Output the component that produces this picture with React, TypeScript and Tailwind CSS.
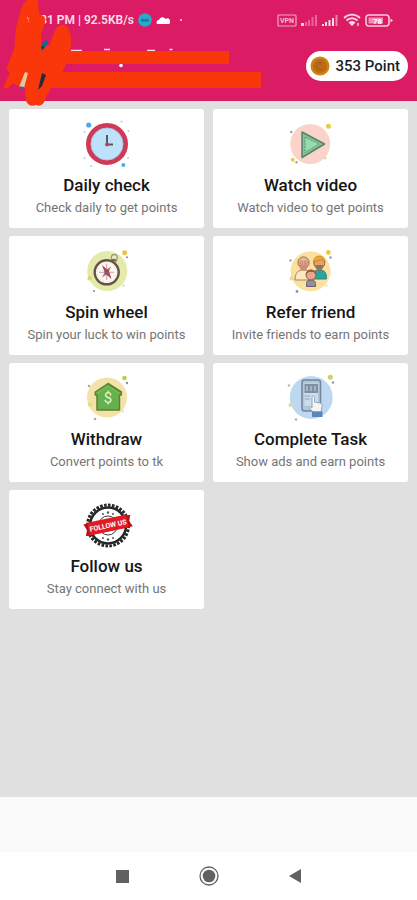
import React from 'react';

interface Task {
    title: string;
    subtitle: string;
    icon: React.ReactNode;
}

const IconBox: React.FC<{ children: React.ReactNode }> = ({ children }) => (
    <svg viewBox="0 0 48 48" className="size-12 overflow-visible" fill="none" aria-hidden="true">
        {children}
    </svg>
);

const ClockIcon = () => (
    <IconBox>
        <circle cx="24" cy="24" r="18.5" fill="#bfe2fb" stroke="#cf3a57" strokeWidth="5" />
        <circle cx="24" cy="24" r="16" stroke="#a9c9e6" strokeWidth="1" />
        <path d="M24 15v9.5h6" stroke="#46606c" strokeWidth="2" />
        <circle cx="24" cy="24.5" r="2" fill="#c23f5e" />
        <circle cx="5.7" cy="5" r="2.6" fill="#56a8e4" />
        <circle cx="40.3" cy="45" r="2" fill="#56a8e4" />
        <g fill="#b5cfdf">
            <circle cx="38.5" cy="1.5" r="1" />
            <circle cx="45.5" cy="11" r="1" />
            <circle cx="1.5" cy="12" r="1" />
            <circle cx="1.5" cy="38" r="1" />
            <circle cx="8" cy="46" r="1" />
            <circle cx="45" cy="38" r="1" />
        </g>
    </IconBox>
);

const PlayIcon = () => (
    <IconBox>
        <circle cx="23.2" cy="24" r="20" fill="#fad4cb" />
        <path d="M15 12v25.5L37.5 24z" fill="#7fc59a" stroke="#5f7f66" strokeWidth="1.5" strokeLinejoin="round" />
        <path d="M18 17v15.5L32 24z" fill="#96dcae" stroke="#65957a" strokeWidth="1" strokeDasharray="2 1" />
        <circle cx="41.5" cy="6.3" r="2.5" fill="#eccb3e" />
        <circle cx="5.8" cy="39.7" r="2" fill="#eccb3e" />
        <circle cx="4.2" cy="12" r="1.3" fill="#a7a2a5" />
        <circle cx="9.5" cy="42.3" r="1.2" fill="#a7a2a5" />
        <circle cx="38" cy="38" r="1.5" fill="#e6d9a4" />
    </IconBox>
);

const CompassIcon = () => (
    <IconBox>
        <circle cx="24.3" cy="24" r="20" fill="#e2eba9" />
        <circle cx="31.3" cy="10.5" r="3" fill="#e9eec8" stroke="#9a9b78" strokeWidth="1.3" />
        <path d="M28 14l3-1.500 2.500 2" stroke="#6d6048" strokeWidth="1.5" />
        <circle cx="23.7" cy="25.3" r="12" fill="#fbf8f1" stroke="#69514a" strokeWidth="2.4" />
        <circle cx="23.7" cy="25.3" r="9.5" stroke="#ddd5cd" strokeWidth="1" strokeDasharray="1 2" />
        <path d="M19 18l7 6 2.5 8-6.5-5.5z" fill="#b44660" />
        <path d="M28 19.5l-3 7-6 4 3.5-7z" fill="#74404c" opacity=".7" />
        <path d="M23.7 17v16M16 25.3h15" stroke="#a66b77" strokeWidth=".6" />
        <circle cx="41.7" cy="5.7" r="2.5" fill="#e6c840" />
        <circle cx="6.7" cy="31.3" r="2.3" fill="#e9d65f" />
        <circle cx="44" cy="10.3" r="1" fill="#8d8b84" />
        <circle cx="11" cy="44" r="1.1" fill="#8d9187" />
        <circle cx="40.5" cy="38.5" r="1.2" fill="#dbe1b0" />
    </IconBox>
);

const FamilyIcon = () => (
    <IconBox>
        <circle cx="23.5" cy="24.3" r="20" fill="#fae1a0" />
        <path d="M8 33c0-7 3-10 8.5-10S25 26 25 33z" fill="#fbe9c4" stroke="#a08357" strokeWidth="1" />
        <path d="M24 32c0-6 3-9 8.5-9s7 3 7 9z" fill="#27a5a0" stroke="#3d7f79" strokeWidth="1" />
        <circle cx="16.5" cy="15.5" r="5.6" fill="#edb394" stroke="#916855" strokeWidth="1" />
        <path d="M12.5 17.5h8v2a4 4 0 0 1-8 0z" fill="#cf8d73" />
        <circle cx="14.3" cy="15.5" r="1.5" stroke="#8c665c" strokeWidth=".6" />
        <circle cx="18.7" cy="15.5" r="1.5" stroke="#8c665c" strokeWidth=".6" />
        <circle cx="32.3" cy="16" r="5.5" fill="#e4a077" stroke="#8e6540" strokeWidth="1" />
        <path d="M26.5 15c0-8 11.5-8 11.5 0l-3-2.5z" fill="#efab27" stroke="#a87222" strokeWidth=".6" />
        <path d="M28.5 18h7.5v2a3.8 3.8 0 0 1-7.5 0z" fill="#a0704c" />
        <path d="M19.5 39.5v-3c0-5 9-5 9 0v3z" fill="#928f9c" stroke="#67616c" strokeWidth="1" />
        <circle cx="24" cy="28" r="5" fill="#e7a78a" stroke="#8d5c48" strokeWidth="1" />
        <path d="M19 28c-.5-7 10.5-7 10 0l-2.5-3h-5z" fill="#a5583a" />
        <circle cx="41.3" cy="5.5" r="2.4" fill="#e8ca45" />
        <circle cx="43.5" cy="10.5" r="1.2" fill="#a292b5" />
        <circle cx="3.5" cy="13.5" r="1.3" fill="#aaa3c4" />
        <circle cx="4.5" cy="31.5" r="2" fill="#f0db83" />
        <circle cx="10" cy="44.5" r="1.4" fill="#958cab" />
        <circle cx="39.5" cy="38.5" r="1.2" fill="#f3e3a9" />
    </IconBox>
);

const HouseIcon = () => (
    <IconBox>
        <circle cx="24" cy="23.5" r="20" fill="#f4e3a8" />
        <path
            d="M25 9.5 12.3 18v3H14v15h22.500V21h1.800v-3z"
            fill="#67b14c"
            stroke="#5f7d37"
            strokeWidth="1.5"
            strokeLinejoin="round"
        />
        <path d="M14.5 19.5 25 12.5l11 7" stroke="#7bc25b" strokeWidth="1" />
        <text x="25" y="29" textAnchor="middle" fontSize="15" fontFamily="Roboto, sans-serif" fill="#e1f4da">
            $
        </text>
        <circle cx="41.5" cy="4" r="2.3" fill="#bccb57" />
        <circle cx="44" cy="9" r="1.2" fill="#8f938b" />
        <circle cx="6" cy="12" r="1.3" fill="#acaca4" />
        <circle cx="7" cy="30.5" r="2.2" fill="#e6dc86" />
        <circle cx="12" cy="45" r="1.3" fill="#afafa8" />
        <circle cx="40" cy="37.5" r="1.2" fill="#f0e5b8" />
    </IconBox>
);

const PhoneIcon = () => (
    <IconBox>
        <circle cx="24.2" cy="23.5" r="21.5" fill="#bdd8f0" />
        <rect x="15" y="6" width="18.5" height="31" rx="2.5" fill="#b3c7da" stroke="#71859b" strokeWidth="1.5" />
        <rect x="17.5" y="9.5" width="13.5" height="22.5" fill="#c8deef" />
        <rect x="17.5" y="10" width="13.5" height="9" fill="#7e91a3" />
        <path d="M19 12h2v5h-2zm4 0h2v5h-2zm4 0h2v5h-2z" fill="#a5b7bd" />
        <path d="M18 22h5M18 25h5" stroke="#8da5ba" strokeWidth="1" />
        <path
            d="M25 34V23.5c0-2 2.5-2 2.5 0V28l5.5 1c2 .5 2.5 2 2 4l-1 5h-8l-3.5-4c-1-1.5 1-2.5 2.5 0z"
            fill="#f3f4f5"
            stroke="#8d9fb1"
            strokeWidth=".9"
        />
        <path d="M25 37.5h10.5V43H25z" fill="#5788b9" />
        <circle cx="43.3" cy="3.3" r="2.5" fill="#cfce68" />
        <circle cx="46" cy="8.5" r="1.2" fill="#8f9798" />
        <circle cx="2" cy="11.5" r="1.3" fill="#b9b9a6" />
        <circle cx="3.5" cy="31" r="2" fill="#d9d9a0" />
        <circle cx="9" cy="45.5" r="1.3" fill="#a9b1b7" />
    </IconBox>
);

const FollowIcon = () => (
    <IconBox>
        <circle cx="25" cy="24.5" r="20.5" stroke="#262626" strokeWidth="3" strokeDasharray="2.6 1.4" />
        <circle cx="25" cy="24.5" r="18" fill="#fff" stroke="#262626" strokeWidth="2.5" />
        <circle cx="25" cy="24.5" r="9.5" stroke="#3b3b3b" strokeWidth="1" />
        <g fill="#555">
            <circle cx="20" cy="13" r="1" />
            <circle cx="25" cy="11.5" r="1.2" />
            <circle cx="30" cy="13" r="1" />
            <circle cx="20" cy="37" r="1" />
            <circle cx="25" cy="38.5" r="1.2" />
            <circle cx="30" cy="37" r="1" />
        </g>
        <g transform="rotate(-12 25 24)">
            <path d="M1 18.5h48l-2.5 6 2.5 6H1l2.5-6z" fill="#b90e16" />
            <path d="M5 17.5h40v13H5z" fill="#e11b22" />
            <text
                x="25"
                y="27"
                textAnchor="middle"
                fontSize="7"
                fontWeight="700"
                fontFamily="Roboto, sans-serif"
                fill="#fff"
            >
                FOLLOW US
            </text>
        </g>
    </IconBox>
);

const TASKS: Task[] = [
    { title: 'Daily check', subtitle: 'Check daily to get points', icon: <ClockIcon /> },
    { title: 'Watch video', subtitle: 'Watch video to get points', icon: <PlayIcon /> },
    { title: 'Spin wheel', subtitle: 'Spin your luck to win points', icon: <CompassIcon /> },
    { title: 'Refer friend', subtitle: 'Invite friends to earn points', icon: <FamilyIcon /> },
    { title: 'Withdraw', subtitle: 'Convert points to tk', icon: <HouseIcon /> },
    { title: 'Complete Task', subtitle: 'Show ads and earn points', icon: <PhoneIcon /> },
    { title: 'Follow us', subtitle: 'Stay connect with us', icon: <FollowIcon /> },
];

const StatusBar = () => (
    <div className="flex h-10 items-center justify-between pl-[30px] pr-6 text-[#fbdce8]">
        <div className="flex items-center gap-1">
            <span className="text-xs font-semibold">9:31 PM | 92.5KB/s</span>
            <svg viewBox="0 0 14 14" className="size-3.5" aria-hidden="true">
                <circle cx="7" cy="7" r="6.8" fill="#25a9cc" />
                <path d="M3 7.5h8M4.5 5.5v3M8.500 5.500v3" stroke="#1b6f94" strokeWidth="1.5" />
            </svg>
            <svg viewBox="0 0 14 10" className="h-2.5 w-3.5" aria-hidden="true">
                <path d="M1 9a2.500 2.500 0 0 1 2-4 3.500 3.500 0 0 1 6.500-1A3 3 0 0 1 13 9z" fill="#fff" />
            </svg>
            <span className="ml-1.5 size-0.5 rounded-full bg-[#fbdce8]"></span>
        </div>
        <div className="flex items-center gap-1">
            <svg viewBox="0 0 20 13" className="h-[13px] w-5" fill="none" aria-hidden="true">
                <rect x="1" y="1" width="18" height="11" rx="1" stroke="#f3a6c3" strokeWidth="1.2" />
                <text x="10" y="9" textAnchor="middle" fontSize="7" fontWeight="700" fontFamily="Roboto, sans-serif" fill="#f7bcd2">
                    VPN
                </text>
            </svg>
            <svg viewBox="0 0 17 12" className="h-3 w-[17px]" aria-hidden="true">
                <path d="M0 9h3v3H0z" fill="#f9cfdf" />
                <path d="M4 8h2v4H4zm3-2h2v6H7zm3.500-3h2v9h-2zM14 1h2v11h-2z" fill="#e9669a" />
            </svg>
            <svg viewBox="0 0 17 12" className="h-3 w-[17px]" aria-hidden="true">
                <path d="M0 10h2v2H0zm3-2h2v4H3zm3.500-2h2v6h-2zM10 4h2v8h-2z" fill="#fbdce8" />
                <path d="M13.500 1h2v11h-2z" fill="#ee85ae" />
            </svg>
            <svg viewBox="0 0 18 14" className="h-3.5 w-[18px]" fill="none" aria-hidden="true">
                <path d="M1 5c4.500-4.500 11.500-4.500 16 0M3.500 7.500c3-3 8-3 11 0" stroke="#f9cfdf" strokeWidth="1.8" />
                <path d="M5.500 9.500c2-2 5-2 7 0L9 13z" fill="#fbdce8" />
                <path d="M15 10v3" stroke="#f3a6c3" strokeWidth="2" />
            </svg>
            <svg viewBox="0 0 28 13" className="h-[13px] w-7" fill="none" aria-hidden="true">
                <rect x="1" y="1" width="23" height="11" rx="3" stroke="#f9cfdf" strokeWidth="1.5" />
                <path d="M3.500 3.500H18v6H3.500z" fill="#ef8fb4" />
                <path d="M25.500 4.500 28 6.500l-2.500 2z" fill="#f9cfdf" />
                <text x="12.500" y="9.500" textAnchor="middle" fontSize="8" fontWeight="700" fontFamily="Roboto, sans-serif" fill="#fff">
                    78
                </text>
            </svg>
        </div>
    </div>
);

// red marker strokes over the account name and avatar
const Scribble = () => (
    <svg
        viewBox="0 0 270 110"
        className="pointer-events-none absolute left-0 top-0 h-[110px] w-[270px]"
        fill="none"
        aria-hidden="true"
    >
        <path d="M71 50.5h11M104 49.5h6M147 50.5h8M169.500 49.5h3" stroke="#fbdce8" strokeWidth="1.5" />
        <circle cx="121" cy="65.5" r="1.8" fill="#fff" />
        <path d="M105 87.500h3M161 87.500h3M172 87.500h3" stroke="#f3a6c3" />
        <path d="M60 51h169v13H60zM50 72h211v16H50z" fill="#f9370b" />
        <path
            d="M27 0h11l1 14c4 1 7 4 6 9l-4 12v8l8 3 6-15c3-8 12-9 15 1 2 9 1 18-2 27-3 10-9 18-15 26l-7 12c-2 8-6 10-10 8-5 2-8 0-10-4l-1-13-7-2-5-3-5 5c-4 2-5-1-3-4l5-12c-3-1-4-4-2-8l6-14 2-22 5-19c2-4 3-7 6-9z"
            fill="#f9370b"
        />
        <path d="M41 44l6-4 1 4-6 7z" fill="#1d648f" />
        <path d="M41 47l3-1-1 4z" fill="#252b3b" />
        <path d="M25 72l3 1-4 15-5-1z" fill="#e8c79f" />
        <path d="M19 86l5 1v2l-4-1z" fill="#2f6f93" />
        <path d="M42 73l4 2-4 11-4 4z" fill="#252b3b" />
        <path d="M29 20l-2-3M28 22l1-1" stroke="#f3a6c3" />
    </svg>
);

const NavBar = () => (
    <nav className="flex h-12 items-center justify-center bg-white text-[#616161]">
        <button aria-label="Recent apps" className="flex h-12 w-[86px] items-center justify-center">
            <span className="size-[13px] bg-current"></span>
        </button>
        <button aria-label="Home" className="flex h-12 w-[86px] items-center justify-center">
            <svg viewBox="0 0 20 20" className="size-5" fill="none">
                <circle cx="10" cy="10" r="9" stroke="currentColor" strokeWidth="1.3" />
                <circle cx="10" cy="10" r="6.3" fill="currentColor" />
            </svg>
        </button>
        <button aria-label="Back" className="flex h-12 w-[86px] items-center justify-center">
            <svg viewBox="0 0 12 14" className="h-3.5 w-3" fill="currentColor">
                <path d="M12 0v14L0 7z" />
            </svg>
        </button>
    </nav>
);

export default function App() {
    return (
        <div className="flex min-h-screen flex-col bg-[#e0e0e0] font-['Roboto',sans-serif]">
            <header className="relative bg-[#db1b64]">
                <StatusBar />
                <div className="flex justify-end pb-5 pl-4 pr-[9px] pt-[11px]">
                    <div className="flex h-[30px] items-center gap-1.5 rounded-full bg-white pl-1 pr-2">
                        <svg viewBox="0 0 20 20" className="size-5" fill="none" aria-hidden="true">
                            <circle cx="10" cy="10" r="9.5" fill="#cf8212" />
                            <circle cx="10" cy="10" r="7" fill="#bd6b12" />
                            <path d="M12.500 7.500a3.500 3.500 0 1 0 0 5M10 6v3" stroke="#a0642a" strokeWidth="1.3" />
                        </svg>
                        <span className="text-[15px] font-medium text-[#1c1c1c]">353 Point</span>
                    </div>
                </div>
                <Scribble />
            </header>

            <main className="flex-1 px-[9px] py-2">
                <div className="grid grid-cols-2 gap-x-[9px] gap-y-2">
                    {TASKS.map((task) => (
                        <button
                            key={task.title}
                            className="flex h-[119px] flex-col items-center rounded-[3px] bg-white pt-[11px]"
                        >
                            {task.icon}
                            <span className="mt-[5px] text-[17px] font-medium leading-6 text-[#161616]">{task.title}</span>
                            <span className="text-[13px] leading-[22px] text-[#757575]">{task.subtitle}</span>
                        </button>
                    ))}
                </div>
            </main>

            <div className="h-[55px] bg-[#fafafa]"></div>
            <NavBar />
        </div>
    );
}
